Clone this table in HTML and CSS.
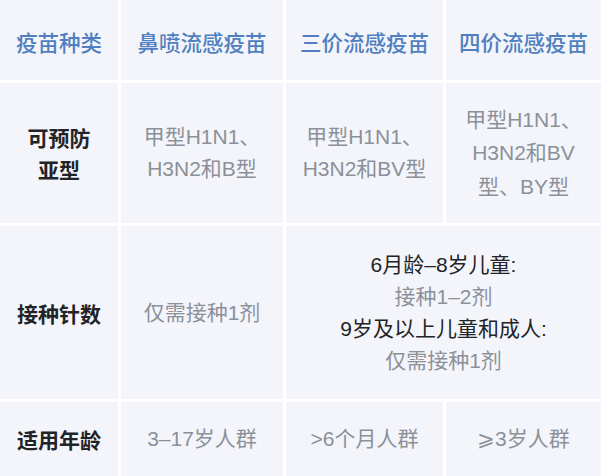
FILE: index.html
```html
<!DOCTYPE html>
<html lang="zh-CN">
<head>
<meta charset="utf-8">
<title>流感疫苗对比</title>
<link rel="stylesheet" href="styles.css">
</head>
<body>
<div class="table">
  <div class="cell head">疫苗种类</div>
  <div class="cell head">鼻喷流感疫苗</div>
  <div class="cell head">三价流感疫苗</div>
  <div class="cell head">四价流感疫苗</div>

  <div class="cell label">可预防<br>亚型</div>
  <div class="cell val">甲型H1N1、<br>H3N2和B型</div>
  <div class="cell val">甲型H1N1、<br>H3N2和BV型</div>
  <div class="cell val tall">甲型H1N1、<br>H3N2和BV<br>型、BY型</div>

  <div class="cell label">接种针数</div>
  <div class="cell val">仅需接种1剂</div>
  <div class="cell val span2">
    <span class="dark">6月龄–8岁儿童:</span>
    <span>接种1–2剂</span>
    <span class="dark">9岁及以上儿童和成人:</span>
    <span>仅需接种1剂</span>
  </div>

  <div class="cell label">适用年龄</div>
  <div class="cell val">3–17岁人群</div>
  <div class="cell val">&gt;6个月人群</div>
  <div class="cell val">⩾3岁人群</div>
</div>
</body>
</html>
```

FILE: styles.css
```css
html, body {
  margin: 0;
  padding: 0;
  background: #ffffff;
}

body {
  width: 606px;
  height: 476px;
  overflow: hidden;
  font-family: "Noto Sans CJK SC", "Noto Sans", "DejaVu Sans", sans-serif;
}

.table {
  display: grid;
  grid-template-columns: 118px 162px 157px 155px;
  grid-template-rows: 80px 140px 173px 74px;
  gap: 3px;
  background: #ffffff;
  width: 601px;
}

.cell {
  background: #f3f5fb;
  display: flex;
  flex-direction: column;
  align-items: center;
  justify-content: center;
  text-align: center;
  font-size: 21px;
  line-height: 32px;
}

.head {
  color: #4f7fc0;
  font-size: 21.5px;
  font-weight: 500;
  padding-top: 3px;
}

.label {
  color: #222326;
  font-weight: 700;
}

.val {
  color: #8b9099;
  font-weight: 400;
  font-family: "Liberation Sans", "Noto Sans CJK SC", "DejaVu Sans", sans-serif;
}

.tall {
  line-height: 33.5px;
}

.span2 {
  grid-column: span 2;
  line-height: 32px;
}

.span2 span {
  display: block;
}

.span2 .dark {
  color: #222326;
}
```
